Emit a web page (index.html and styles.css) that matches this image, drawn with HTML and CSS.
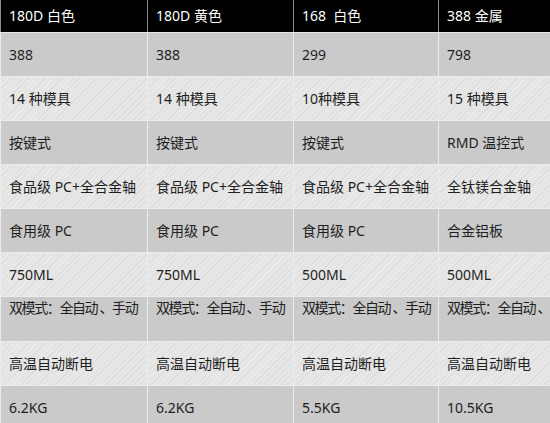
FILE: index.html
```html
<!DOCTYPE html>
<html lang="zh-CN">
<head>
<meta charset="utf-8">
<title>产品参数对比</title>
<link rel="stylesheet" href="styles.css">
</head>
<body>
<table class="spec">
  <colgroup>
    <col class="c1"><col class="c2"><col class="c3"><col class="c4">
  </colgroup>
  <thead>
    <tr class="head">
      <th>180D 白色</th><th>180D 黄色</th><th>168&nbsp; 白色</th><th>388 金属</th>
    </tr>
  </thead>
  <tbody>
    <tr class="dark"><td>388</td><td>388</td><td>299</td><td>798</td></tr>
    <tr class="light"><td>14 种模具</td><td>14 种模具</td><td>10种模具</td><td>15 种模具</td></tr>
    <tr class="dark"><td>按键式</td><td>按键式</td><td>按键式</td><td>RMD 温控式</td></tr>
    <tr class="light"><td>食品级 PC+全合金轴</td><td>食品级 PC+全合金轴</td><td>食品级 PC+全合金轴</td><td>全钛镁合金轴</td></tr>
    <tr class="dark"><td>食用级 PC</td><td>食用级 PC</td><td>食用级 PC</td><td>合金铝板</td></tr>
    <tr class="light"><td>750ML</td><td>750ML</td><td>500ML</td><td>500ML</td></tr>
    <tr class="dark top"><td>双模式：全自动 、手动</td><td>双模式：全自动 、手动</td><td>双模式：全自动 、手动</td><td>双模式：全自动 、手动</td></tr>
    <tr class="light"><td>高温自动断电</td><td>高温自动断电</td><td>高温自动断电</td><td>高温自动断电</td></tr>
    <tr class="dark"><td>6.2KG</td><td>6.2KG</td><td>5.5KG</td><td>10.5KG</td></tr>
  </tbody>
</table>
</body>
</html>
```
FILE: styles.css
```css
html, body {
  margin: 0;
  padding: 0;
  width: 550px;
  height: 423px;
  overflow: hidden;
  background: #e6e6e6;
}

.spec {
  border-collapse: collapse;
  table-layout: fixed;
  width: 584px;
  font-family: "Noto Sans", "Noto Sans CJK SC", sans-serif;
  font-size: 14px;
  color: #1e1e1e;
}

.c1 { width: 147px; }
.c2 { width: 146px; }
.c3 { width: 145px; }
.c4 { width: 146px; }

.spec th,
.spec td {
  text-align: left;
  font-weight: normal;
  padding: 0 0 0 8px;
  white-space: nowrap;
  overflow: hidden;
  line-height: 20px;
  vertical-align: middle;
}

.head th {
  background: #000;
  color: #fff;
  height: 32px;
  border: 1px solid #8a8a8a;
  border-top: none;
  border-bottom: 1px solid #e8e8e8;
}

.spec td {
  height: 43px;
  border: 1px solid #ececec;
}

.dark td {
  background: #cacaca;
}

.light td {
  background-color: #e7e7e7;
  background-image: repeating-linear-gradient(135deg, #e8e8e8 0, #e8e8e8 3px, #dbdbdb 3px, #dbdbdb 4px);
}

.top td {
  vertical-align: top;
  padding-top: 1px;
  letter-spacing: -1.4px;
}
```
